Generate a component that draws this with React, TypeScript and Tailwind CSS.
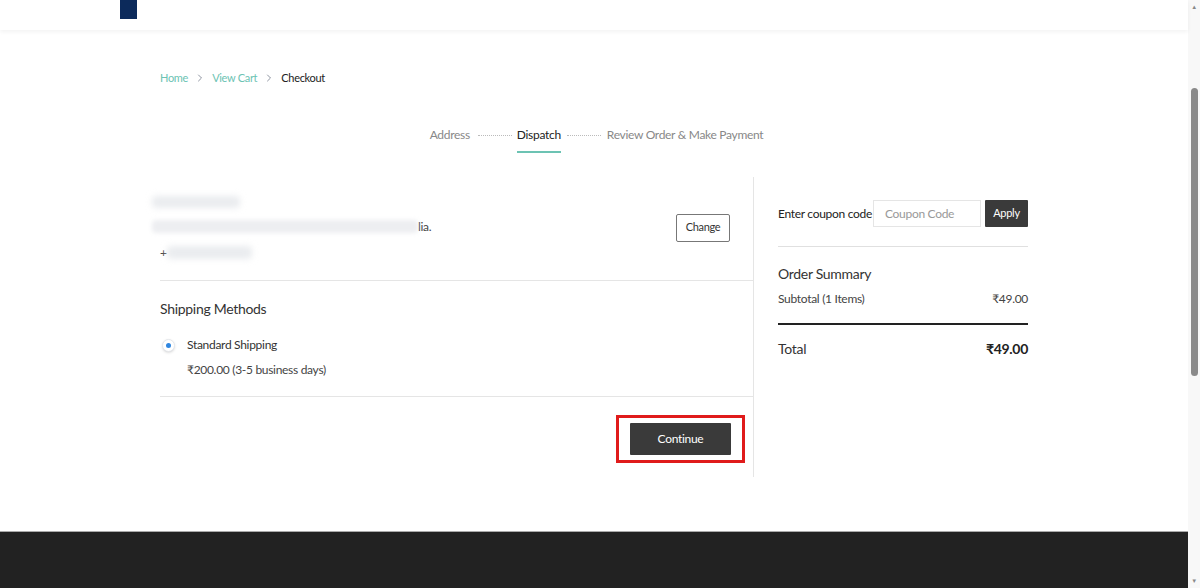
import { ChevronRight } from "lucide-react";

const Radio = () => (
  <span className="w-[13px] h-[13px] rounded-full border border-gray-200 shadow-sm flex items-center justify-center bg-white">
    <span className="w-[5px] h-[5px] rounded-full bg-[#2f86e0]" />
  </span>
);

const App = () => {
  return (
    <div className="flex h-[588px] w-[1200px] overflow-hidden bg-white text-[#333] tracking-[-0.3px]" style={{ fontFamily: "Lato, 'Noto Sans', sans-serif" }}>
      <div className="flex-1 flex flex-col">
        {/* Header */}
        <header className="h-[30px] bg-white shadow-[0_2px_4px_rgba(0,0,0,0.05)] relative z-10">
          <div className="ml-[120px] w-[17px] h-[19px] bg-[#0c2a5b]" />
        </header>

        <main className="flex-1 px-[160px]">
          {/* Breadcrumb */}
          <nav className="mt-[41px] flex items-center text-[11px] leading-[14px]">
            <span className="text-[#6cc3b3]">Home</span>
            <ChevronRight size={12} strokeWidth={1.5} className="mx-[6px] text-gray-500" />
            <span className="text-[#6cc3b3]">View Cart</span>
            <ChevronRight size={12} strokeWidth={1.5} className="mx-[6px] text-gray-500" />
            <span className="text-[#222]">Checkout</span>
          </nav>

          {/* Steps */}
          <div className="mt-[42px] flex justify-center items-start text-[12px] leading-[16px] pl-[5px]">
            <span className="text-[#888]">Address</span>
            <span className="w-[34px] mt-[8px] ml-[8px] mr-[5px] border-t border-dotted border-[#bbb]" />
            <div className="flex flex-col items-center">
              <span className="text-[#222]">Dispatch</span>
              <span className="mt-[8px] w-full h-[2px] bg-[#6cc3b3]" />
            </div>
            <span className="w-[34px] mt-[8px] mx-[6px] border-t border-dotted border-[#bbb]" />
            <span className="text-[#888]">Review Order &amp; Make Payment</span>
          </div>

          {/* Body */}
          <div className="mt-[24px] flex">
            <div className="w-[594px] border-r border-[#e5e5e5] h-[300px]">
              {/* Address */}
              <div className="h-[104px] border-b border-[#e5e5e5] flex items-center justify-between pr-[23px]">
                <div className="text-[12px] text-[#444]">
                  <div className="-ml-[8px] w-[88px] h-[12px] bg-gray-200/80 rounded blur-[3px]" />
                  <div className="mt-[10px] flex items-center">
                    <div className="-ml-[8px] w-[266px] h-[13px] bg-gray-200/70 rounded blur-[2px]" />
                    <span>lia.</span>
                  </div>
                  <div className="mt-[8px] flex items-center">
                    <span>+</span>
                    <div className="w-[85px] h-[13px] bg-gray-200/80 rounded blur-[3px]" />
                  </div>
                </div>
                <button className="w-[54px] h-[28px] border border-[#777] rounded-[2px] text-[11px] text-[#333] mt-[-2px]">
                  Change
                </button>
              </div>

              {/* Shipping */}
              <div className="h-[116px] border-b border-[#e5e5e5] pt-[19px]">
                <h3 className="text-[14px] leading-[18px] text-[#333]">Shipping Methods</h3>
                <div className="mt-[18px] flex items-center pl-[2px]">
                  <Radio />
                  <span className="ml-[12px] text-[12px] text-[#333]">Standard Shipping</span>
                </div>
                <div className="mt-[7px] pl-[27px] text-[12px] text-[#444]">₹200.00 (3-5 business days)</div>
              </div>

              {/* Continue */}
              <div className="flex justify-end pr-[8px] pt-[18px]">
                <div className="border-[3px] border-[#e01b1b] px-[11px] py-[5px]">
                  <button className="w-[101px] h-[32px] bg-[#3a3a3a] text-white text-[12px] rounded-[1px]">
                    Continue
                  </button>
                </div>
              </div>
            </div>

            {/* Summary */}
            <div className="ml-[24px] w-[250px] pt-[23px]">
              <div className="flex items-center h-[27px]">
                <span className="text-[12px] text-[#222] whitespace-nowrap">Enter coupon code</span>
                <div className="ml-[1px] w-[108px] h-[27px] border border-[#e5e5e5] flex items-center px-[11px] text-[12px] text-[#999]">
                  Coupon Code
                </div>
                <button className="ml-auto w-[43px] h-[27px] bg-[#3a3a3a] text-white text-[11px] rounded-[1px]">Apply</button>
              </div>
              <div className="mt-[19px] border-t border-[#e0e0e0]" />
              <h3 className="mt-[18px] text-[14px] leading-[18px] text-[#333]">Order Summary</h3>
              <div className="mt-[7px] flex justify-between text-[12px] text-[#444]">
                <span>Subtotal (1 Items)</span>
                <span>₹49.00</span>
              </div>
              <div className="mt-[15px] h-[2px] bg-[#222]" />
              <div className="mt-[13px] flex justify-between text-[14px] text-[#333]">
                <span>Total</span>
                <span className="font-bold text-[#222]">₹49.00</span>
              </div>
            </div>
          </div>
        </main>

        {/* Footer */}
        <footer className="h-[57px] bg-[#222] border-t border-[#aaa]" />
      </div>

      {/* Scrollbar */}
      <div className="w-[15px] bg-[#f8f8f8] flex flex-col items-center">
        <span className="mt-[3px] text-[6px] leading-[8px] text-[#888]">▲</span>
        <div className="mt-[77px] w-[7px] h-[288px] rounded-full bg-[#8a8a8a]" />
        <span className="mt-auto mb-[3px] text-[6px] leading-[8px] text-[#888]">▼</span>
      </div>
    </div>
  );
};

export default App;
